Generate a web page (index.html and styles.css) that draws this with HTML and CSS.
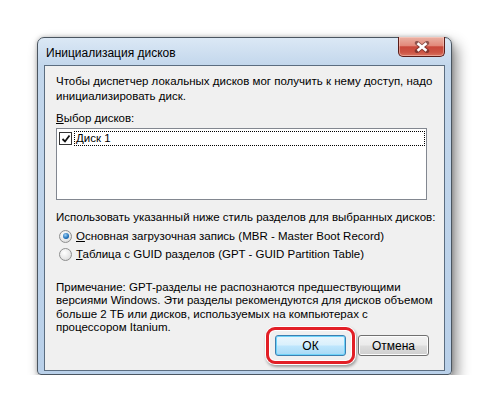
FILE: index.html
```html
<!DOCTYPE html>
<html lang="ru">
<head>
  <meta charset="UTF-8" />
  <title>Инициализация дисков</title>
  <link rel="stylesheet" href="styles.css">
</head>
<body>
  <div class="stage">
    <div class="window">
      <div class="titlebar">
        <span class="title">Инициализация дисков</span>
        <div class="close-btn" title="Закрыть">
          <svg width="16" height="12" viewBox="0 0 16 12">
            <path d="M3 2 L13 10 M13 2 L3 10" stroke="#4a2020" stroke-width="4.4" stroke-linecap="round" opacity="0.55"/>
            <path d="M3.5 2.3 L12.5 9.7 M12.5 2.3 L3.5 9.7" stroke="#fff" stroke-width="2.6"/>
          </svg>
        </div>
      </div>
      <div class="client">
        <p class="intro">Чтобы диспетчер локальных дисков мог получить к нему доступ, надо<br>инициализировать диск.</p>
        <div class="label"><u>В</u>ыбор дисков:</div>
        <div class="listbox">
          <div class="list-item">
            <span class="checkbox">
              <svg width="10" height="10" viewBox="0 0 10 10"><path d="M1.5 5 L4 7.5 L8.5 1.5" fill="none" stroke="#111" stroke-width="1.8"/></svg>
            </span>
            <span class="item-text">Диск 1</span>
          </div>
        </div>
        <div class="label style-label">Использовать указанный ниже стиль разделов для выбранных дисков:</div>
        <div class="radio-row first">
          <span class="radio selected"></span>
          <span><u>О</u>сновная загрузочная запись (MBR - Master Boot Record)</span>
        </div>
        <div class="radio-row">
          <span class="radio"></span>
          <span><u>Т</u>аблица с GUID разделов (GPT - GUID Partition Table)</span>
        </div>
        <p class="note">Примечание: GPT-разделы не распознаются предшествующими<br>версиями Windows. Эти разделы рекомендуются для дисков объемом<br>больше 2 ТБ или дисков, используемых на компьютерах с<br>процессором Itanium.</p>
        <div class="buttons">
          <div class="highlight">
            <button class="btn default">ОК</button>
          </div>
          <button class="btn">Отмена</button>
        </div>
      </div>
    </div>
  </div>
</body>
</html>
```

FILE: styles.css
```css
html, body {
  margin: 0; padding: 0; background: #fff;
  font-family: 'Liberation Sans', Arial, sans-serif;
}
.stage {
  padding: 37px 0 0 37px;
}
.window {
  width: 401px; height: 333px;
  border: 1px solid #4a5560;
  border-radius: 7px 7px 4px 4px;
  background: linear-gradient(180deg, #dbe8f5 0px, #c3d7ec 27px, #b9d0e9 100%);
  box-shadow: 5px 7px 14px rgba(0,0,0,0.45), 0 0 4px rgba(0,0,0,0.25);
  display: flex; flex-direction: column;
  padding: 0 6px 3px 6px;
}
.titlebar {
  height: 27px; flex: none; display: flex; align-items: flex-start; justify-content: space-between;
}
.title {
  font-size: 12px; color: #000; margin: 8px 0 0 2px;
}
.close-btn {
  width: 45px; height: 19px; margin: -1px 0 0 0;
  border: 1px solid #5a1c18; border-top: none;
  border-radius: 0 0 5px 5px;
  background: linear-gradient(180deg, #eab2a4 0%, #e2897a 45%, #c9483a 52%, #cc5444 80%, #d9735f 100%);
  display: flex; align-items: center; justify-content: center;
  box-shadow: inset 0 0 0 1px rgba(255,220,210,0.45);
}
.client {
  flex: 1;
  background: #f0f0f0;
  border: 1px solid #5b6d80;
  padding: 8px 1px 0 11px;
  font-size: 11.5px; color: #000;
  display: flex; flex-direction: column;
}
.intro {
  margin: 0; line-height: 15px; white-space: nowrap;
}
.label {
  margin-top: 7px; line-height: 14px; white-space: nowrap;
}
.listbox {
  margin-top: 3px; height: 72px; box-sizing: border-box;
  background: #fff; border: 1px solid #828790;
  padding: 2px 1px 0 2px;
  margin-right: 16px;
}
.list-item {
  display: flex; align-items: center; height: 15px;
}
.checkbox {
  width: 11px; height: 11px; border: 1px solid #333;
  background: #fff; display: flex; align-items: center; justify-content: center;
  margin-right: 2px;
}
.item-text {
  flex: 1; border: 1px dotted #000; padding-left: 1px; line-height: 13px;
}
.style-label {
  margin-top: 10px;
}
.radio-row {
  display: flex; align-items: center; height: 18px; padding-left: 3px;
}
.radio-row.first { margin-top: 3px; }
.radio {
  width: 11px; height: 11px; border-radius: 50%;
  border: 1px solid #8e8f8f;
  background: radial-gradient(circle at 40% 35%, #fff 0%, #e6e6e6 60%, #cfcfcf 100%);
  margin-right: 4px; position: relative;
}
.radio.selected::after {
  content: ""; position: absolute; left: 2.5px; top: 2.5px;
  width: 6px; height: 6px; border-radius: 50%;
  background: radial-gradient(circle at 40% 35%, #9fd0f5 0%, #1d6fb8 60%, #0c4a88 100%);
}
.note {
  margin: 18px 0 0 0; line-height: 13.3px; white-space: nowrap;
}
.buttons {
  display: flex; justify-content: flex-end; align-items: center;
  gap: 3px; margin: -7px 14px 0 0;
}
.highlight {
  border: 3px solid #e21f26; border-radius: 9px;
  padding: 5px 6px;
  box-shadow: 0 0 0 1px #fff, 1px 2px 3px 1px rgba(0,0,0,0.35), inset 0 0 0 1px #fff;
}
.btn {
  width: 71px; height: 21px; padding: 0;
  font-family: 'Liberation Sans', Arial, sans-serif; font-size: 12px; color: #000;
  border: 1px solid #707070; border-radius: 3px;
  background: linear-gradient(180deg, #f2f2f2 0%, #ebebeb 48%, #dddddd 52%, #cfcfcf 100%);
  box-shadow: inset 0 0 0 1px #fcfcfc;
}
.btn.default {
  border-color: #3c7fb1;
  background: linear-gradient(180deg, #eaf6fd 0%, #d9f0fc 48%, #bee6fd 52%, #a7d9f5 100%);
  box-shadow: inset 0 0 0 1px #6fd3f9;
}
```
